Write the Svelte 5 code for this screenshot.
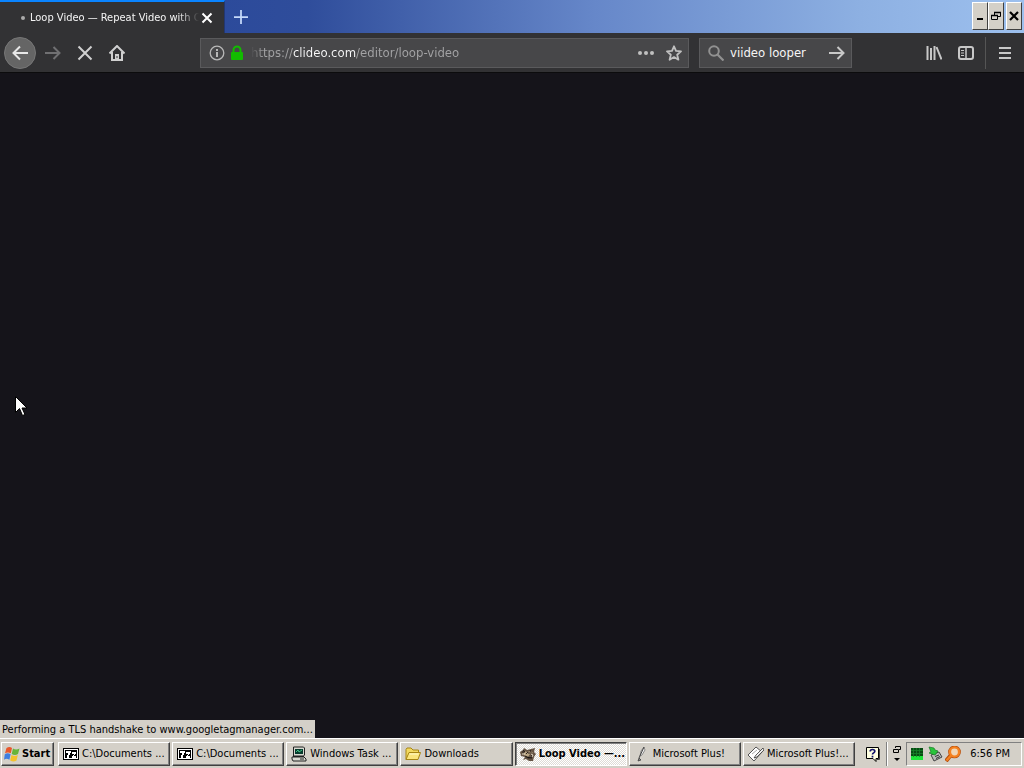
<script>
  let address = $state('https://clideo.com/editor/loop-video');
  let query = $state('viideo looper');
  const tasks = [
    { label: 'C:\\Documents ...', icon: 'zip' },
    { label: 'C:\\Documents ...', icon: 'zip' },
    { label: 'Windows Task ...', icon: 'computer' },
    { label: 'Downloads', icon: 'folder' },
    { label: 'Loop Video —...', icon: 'fox', active: true },
    { label: 'Microsoft Plus!', icon: 'pen' },
    { label: 'Microsoft Plus!...', icon: 'note' }
  ];
</script>

{#snippet taskIcon(name)}
  <svg class="icon" viewBox="0 0 16 16" aria-hidden="true">
    {#if name === 'zip'}
      <path d="M0 2h16v12H0z" fill="#000" />
      <path d="M1 3h14v10H1z" fill="#fff" />
      <path d="M2 4h12v8H2z" fill="#000" />
      <path d="M3 5h5v2H7v2H6v3H4V9h1V7H3zM9 6h4v2h-1v1h-1v1h2v2H9v-2h1V9h1V8H9z" fill="#fff" />
    {:else if name === 'computer'}
      <path d="M2.500 1h10l1 1v7l-1 1h-10z" fill="#d8d8d0" stroke="#222" />
      <path d="M4 3h8v5H4z" fill="#063b2c" />
      <path d="M5 6l2-2 1 2 3-2" fill="none" stroke="#45c48a" />
      <path d="M1 11h12l2 2v2H2l-1-2z" fill="#d8d8d0" stroke="#222" />
      <path d="M9 13h4M2 10.500h11" stroke="#222" />
    {:else if name === 'folder'}
      <path d="M1 13.500V3.500l1-1.500h4l2 2h5.500v3" fill="#f3d95f" stroke="#a78514" />
      <path d="M1 13.500L4 6.500h11.500l-2.500 7z" fill="#fbe57c" stroke="#a78514" />
      <path d="M4.500 8h9" stroke="#fff9cf" />
    {:else if name === 'fox'}
      <path d="M0 6l3-2 1-2 3 2 4-1 4-1-1 4 2 2-2 3-1 4H9l-3-2-3 1 2-3-4-1z" fill="#655444" />
      <path d="M4 5l3 1 4-1 2 2-3 1-2 3-4-2z" fill="#b9a583" />
      <path d="M2 6h3M8 7h4M5 10l3 2h4M10 4l1 2M6 8l2-2M3 4l2 2M12 9l-1 3" stroke="#2a211c" />
      <path d="M11 8l2 1-1 2M2 8h3" stroke="#e5dac4" fill="none" />
    {:else if name === 'pen'}
      <path d="M10 1L7 5l-1 5 2-1 3-5z" fill="#eee" stroke="#777" stroke-width=".8" />
      <path d="M10 1L5 12" stroke="#444" />
      <path d="M5 12l-1 3 3-1z" fill="#888" stroke="#333" stroke-width=".7" />
    {:else}
      <path d="M0 9l8-8 6 5-8 9z" fill="#fff" stroke="#555" />
      <path d="M4 8l5-4" stroke="#aaa" />
      <path d="M15 2L8 9l-2 3 3-1 7-7z" fill="#eee" stroke="#333" stroke-width=".8" />
    {/if}
  </svg>
{/snippet}

<div class="screen">
  <header>
    <div class="titlebar">
      <div class="tab">
        <span class="dot"></span>
        <span class="tab-title">Loop Video — Repeat Video with O</span>
        <button class="tab-close" aria-label="Close tab">
          <svg viewBox="0 0 16 16"><path d="M3.500 3.500l9 9M12.500 3.500l-9 9" stroke="#fff" stroke-width="2" /></svg>
        </button>
      </div>
      <button class="new-tab" aria-label="New tab">
        <svg viewBox="0 0 16 16"><path d="M8 0v16M0 8h16" stroke="#c6dafa" stroke-width="2" /></svg>
      </button>
      <div class="window-buttons">
        <button aria-label="Minimize"><svg viewBox="0 0 12 12"><path d="M3 9h6" stroke="#000" stroke-width="2" /></svg></button>
        <button aria-label="Restore"><svg viewBox="0 0 12 12"><path d="M4.500 5V2.500h6v4H8M4 2.500h7M1.500 5.500h6v4h-6z" fill="none" stroke="#000" /><path d="M1 5.500h7M4 2.500h7" stroke="#000" stroke-width="1.600" /></svg></button>
        <button class="close" aria-label="Close"><svg viewBox="0 0 12 12"><path d="M2 2l8 8M10 2l-8 8" stroke="#000" stroke-width="2.200" /></svg></button>
      </div>
    </div>

    <nav class="toolbar" aria-label="Navigation">
      <button class="tool back" aria-label="Back"><svg viewBox="0 0 16 16"><path d="M16 8H1.500M8 1.500L1.500 8 8 14.500" fill="none" stroke="#e8e8e8" stroke-width="2" /></svg></button>
      <button class="tool" aria-label="Forward"><svg viewBox="0 0 16 16"><path d="M0 8h14.500M8.500 2l6 6-6 6" fill="none" stroke="#707072" stroke-width="2" /></svg></button>
      <button class="tool" aria-label="Stop"><svg viewBox="0 0 16 16"><path d="M1.500 1.500l13 13M14.500 1.500l-13 13" stroke="#d0d0d0" stroke-width="2" /></svg></button>
      <button class="tool" aria-label="Home"><svg viewBox="0 0 16 16"><path d="M0.500 8.500L8 1l7.500 7.500M3 7v8h10V7" fill="none" stroke="#d0d0d0" stroke-width="2" /><path d="M6 15V9h4v6" fill="#d0d0d0" /><path d="M7.500 11h1v2h-1z" fill="#38383a" /></svg></button>
      <div class="field address">
        <button aria-label="Site information"><svg viewBox="0 0 16 16"><circle cx="8" cy="8" r="6.800" fill="none" stroke="#b8b8b8" stroke-width="1.300" /><path d="M8 7v5M8 4v2" stroke="#b8b8b8" stroke-width="2" /></svg></button>
        <svg class="lock" viewBox="0 0 16 16" aria-hidden="true"><path d="M4.500 8V5a3.500 3.500 0 017 0v3" fill="none" stroke="#12bc00" stroke-width="2" /><rect x="2" y="7" width="12" height="8" rx="1" fill="#12bc00" /></svg>
        <input class="url" aria-label="Address" bind:value={address} />
        <button aria-label="Page actions"><svg viewBox="0 0 16 16"><g fill="#c0c0c0"><circle cx="2" cy="8" r="2" /><circle cx="8" cy="8" r="2" /><circle cx="14" cy="8" r="2" /></g></svg></button>
        <button class="star" aria-label="Bookmark"><svg viewBox="0 0 16 16"><path d="M8 1.300l2 4.600 5 .5-3.800 3.300 1.200 5L8 12.100l-4.400 2.600 1.200-5L1 6.400l5-.5z" fill="none" stroke="#c0c0c0" stroke-width="1.800" stroke-linejoin="round" /></svg></button>
      </div>
      <div class="field search">
        <svg class="icon" viewBox="0 0 16 16" aria-hidden="true"><circle cx="6" cy="6" r="4.800" fill="none" stroke="#919191" stroke-width="2" /><path d="M9.500 9.500l6 6" stroke="#919191" stroke-width="2.200" /></svg>
        <input aria-label="Search" bind:value={query} />
        <button aria-label="Go"><svg viewBox="0 0 16 16"><path d="M0 8h15M8.500 2l6 6-6 6" fill="none" stroke="#c8c8c8" stroke-width="2" /></svg></button>
      </div>
      <div class="right-tools">
        <button class="tool" aria-label="Library"><svg viewBox="0 0 16 16"><path d="M1.500 1v14M5 3v12M8.500 1v14" stroke="#c8c8c8" stroke-width="2" /><path d="M10.500 2l5 12.500" stroke="#c8c8c8" stroke-width="2" /></svg></button>
        <button class="tool" aria-label="Sidebars"><svg viewBox="0 0 16 16"><rect x="1" y="2" width="14" height="12" rx="2" fill="none" stroke="#c8c8c8" stroke-width="2" /><path d="M8 2v12" stroke="#c8c8c8" stroke-width="1.500" /><path d="M3 5.500h3M3 8h3M3 10.500h3" stroke="#c8c8c8" /></svg></button>
        <button class="tool menu" aria-label="Menu"><svg viewBox="0 0 16 16"><path d="M2 3h12M2 8h12M2 13h12" stroke="#c8c8c8" stroke-width="2" /></svg></button>
      </div>
    </nav>
  </header>

  <main>
    <div class="status" role="status">Performing a TLS handshake to www.googletagmanager.com...</div>
  </main>

  <footer class="taskbar">
    <button class="task start">
      <svg class="icon" viewBox="0 0 16 16" aria-hidden="true">
        <path d="M2.500 2q3-2 5.500 0L6.800 7.300Q4 5.500 1 7.300z" fill="#e8572b" />
        <path d="M9 2.500q3 2 6.500 0L14 8q-3 2-6.300 0z" fill="#68b43a" />
        <path d="M.8 8.300q3-2 5.800 0l-1.200 5.500q-3-2-5.400 0z" fill="#3f7ee0" />
        <path d="M7.500 9q3 2 6.300 0l-1.300 5.500q-3 2-6.300 0z" fill="#f4c22c" />
      </svg>
      <span>Start</span>
    </button>
    <div class="tasks">
      {#each tasks as task}
        <button class="task" class:active={task.active} aria-pressed={!!task.active}>
          {@render taskIcon(task.icon)}
          <span>{task.label}</span>
        </button>
      {/each}
    </div>
    <button class="help" aria-label="Help">
      <svg class="icon" viewBox="0 0 16 16"><path d="M1.500 1.500h12v11H11v3l-3-3H1.500z" fill="#ffffe1" stroke="#000" /><path d="M14.500 3v10.500H12" fill="none" stroke="#444" /><path d="M5.200 5.500q0-2 2.300-2t2.300 1.800q0 1-1.300 1.700-1 .5-1 1.500M7.500 9.800v1.600" fill="none" stroke="#10106a" stroke-width="1.700" /></svg>
    </button>
    <button class="expander" aria-label="Toolbar options">
      <svg viewBox="0 0 10 18"><path d="M3.500 3V1.500h5v3H7M1.500 4.500h5v3h-5z" fill="none" stroke="#000" /><path d="M2 13h6l-3 3z" fill="#000" /></svg>
    </button>
    <div class="tray">
      <svg class="icon" viewBox="0 0 16 16" aria-hidden="true"><path d="M2 2h12v12H2z" fill="#064c12" /><path d="M2 10h12v4H2z" fill="#1fe43a" /><path d="M4.500 2v9M7.500 2v9M10.500 2v9M2 4.500h12M2 7.500h12" stroke="#16812a" stroke-width=".8" /></svg>
      <svg class="icon" viewBox="0 0 16 16" aria-hidden="true"><path d="M4 9l8-3 3 5-8 4z" fill="#b9b9b9" stroke="#444" /><path d="M8 10.500l4-1.500M9 12.500l4-2" stroke="#333" /><path d="M2 1l5 1 1 2 3 1-3 4-6-2 2-1z" fill="#29c43c" stroke="#187b25" stroke-width=".7" /></svg>
      <svg class="icon" viewBox="0 0 16 16" aria-hidden="true"><path d="M6 9l-5 6" stroke="#b34a08" stroke-width="4" /><circle cx="9.500" cy="6" r="4.600" fill="#f8d5a9" stroke="#b34a08" stroke-width="3.500" /><circle cx="9.500" cy="6" r="4.600" fill="#f0d6b6" stroke="#f58220" stroke-width="2.400" /><path d="M6 9.500l-4.500 5" stroke="#f58220" stroke-width="2.400" /></svg>
      <time>6:56 PM</time>
    </div>
  </footer>

  <svg class="cursor" viewBox="0 0 12 21" aria-hidden="true"><path d="M.5.5v16l4-4 3 7 2.500-1-3-6.500h5z" fill="#fff" stroke="#000" /></svg>
</div>

<style>
  :global(body) { margin: 0; }
  .screen {
    --face: #d4d0c8;
    position: relative;
    display: flex;
    flex-direction: column;
    height: 100vh;
    overflow: hidden;
    background: #15141a;
    color: #000;
    font: 11px/16px Tahoma, "DejaVu Sans Condensed", "DejaVu Sans", sans-serif;
  }
  button { display: flex; align-items: center; justify-content: center; box-sizing: border-box; margin: 0; padding: 0; border: 0; background: none; color: inherit; font: inherit; }
  svg { display: block; flex: none; width: 16px; height: 16px; }
  .titlebar { display: flex; height: 33px; background: linear-gradient(90deg, #24439a, #2f4d9b 30%, #6687c9 58%, #8db0e2 84%, #9dc0ee); }
  .tab { display: flex; align-items: center; box-sizing: border-box; width: 225px; padding: 0 9px 0 21px; border-top: 2px solid #0a84ff; border-right: 1px solid #223772; background: #323234; color: #f5f5f5; }
  .dot { flex: none; width: 4px; height: 4px; margin-right: 5px; border-radius: 50%; background: #aaa; }
  .tab-title { flex: 1; min-width: 0; white-space: nowrap; mask-image: linear-gradient(90deg, #000 88%, transparent); }
  .new-tab { width: 32px; }
  .new-tab svg { width: 14px; height: 14px; }
  .window-buttons { display: flex; align-items: flex-start; margin-left: auto; padding: 2px 2px 0 0; }
  .window-buttons button { width: 16px; height: 28px; border: 1px solid; border-color: #fff #404040 #404040 #fff; background: var(--face); }
  .window-buttons .close { margin-left: 2px; }
  .window-buttons svg { width: 12px; height: 12px; }
  .toolbar { display: flex; align-items: center; box-sizing: border-box; height: 40px; padding: 0 4px; border-bottom: 1px solid #0c0c0d; background: #323234; }
  .tool { flex: none; width: 32px; height: 32px; }
  .back { margin-right: 1px; border: 1px solid #777; border-radius: 50%; background: #656565; }
  .field { display: flex; align-items: center; box-sizing: border-box; height: 30px; border: 1px solid #5a5a5c; background: #474749; }
  .field input { flex: 1; box-sizing: border-box; min-width: 0; height: 20px; margin: 0; padding: 0; border: 0; outline: 0; background: none; color: #f5f5f5; font: 13px/20px Tahoma, "DejaVu Sans Condensed", "DejaVu Sans", sans-serif; }
  .address { flex: 1; margin-left: 67px; padding: 0 6px 0 8px; }
  .address .lock { margin: 0 6px 0 4px; }
  .address .star { margin-left: 12px; }
  .address .url { background: linear-gradient(90deg, #47474900, #a4a4a6 12px, #a4a4a6 42px, #f9f9fa 42px, #f9f9fa 105px, #a4a4a6 105px); background-clip: text; color: transparent; }
  .search { width: 153px; margin: 0 66px 0 10px; padding: 0 6px 0 8px; }
  .search input { margin-left: 6px; }
  .right-tools { display: flex; align-items: center; }
  .menu { width: 35px; margin-left: 3px; padding-left: 3px; border-left: 1px solid #555; }
  main { position: relative; flex: 1; }
  .status { position: absolute; bottom: 0; left: 0; box-sizing: border-box; height: 18px; padding: 2px 2px 0; background: var(--face); white-space: nowrap; }
  .taskbar { display: flex; align-items: center; box-sizing: border-box; height: 30px; padding: 2px 2px 2px 1px; border-top: 1px solid #fff; background: var(--face); }
  .task { justify-content: flex-start; gap: 3px; height: 24px; padding: 0 2px 0 4px; border: 1px solid; border-color: #fff #404040 #404040 #fff; box-shadow: inset -1px -1px #808080; white-space: nowrap; }
  .start { gap: 2px; width: 53px; padding: 0 2px; font-weight: bold; }
  .tasks { display: flex; flex: 1; gap: 2px; margin-left: 4px; }
  .tasks .task { flex: 1; min-width: 0; }
  .tasks .active { border-color: #404040 #fff #fff #404040; background: repeating-conic-gradient(#fff 0 25%, #dedbd5 0 50%) 0 0 / 2px 2px; box-shadow: inset 1px 1px #808080; font-weight: bold; }
  .help { width: 32px; height: 24px; padding-left: 4px; }
  .expander { width: 19px; height: 24px; border-left: 1px solid #fff; box-shadow: -1px 0 #808080; }
  .expander svg { width: 10px; height: 18px; }
  .tray { display: flex; align-items: center; box-sizing: border-box; gap: 2px; height: 24px; padding: 0 11px 0 2px; border: 1px solid; border-color: #808080 #fff #fff #808080; }
  .tray time { margin-left: 7px; white-space: nowrap; }
  .cursor { position: absolute; top: 396px; left: 15px; width: 12px; height: 21px; }
</style>
